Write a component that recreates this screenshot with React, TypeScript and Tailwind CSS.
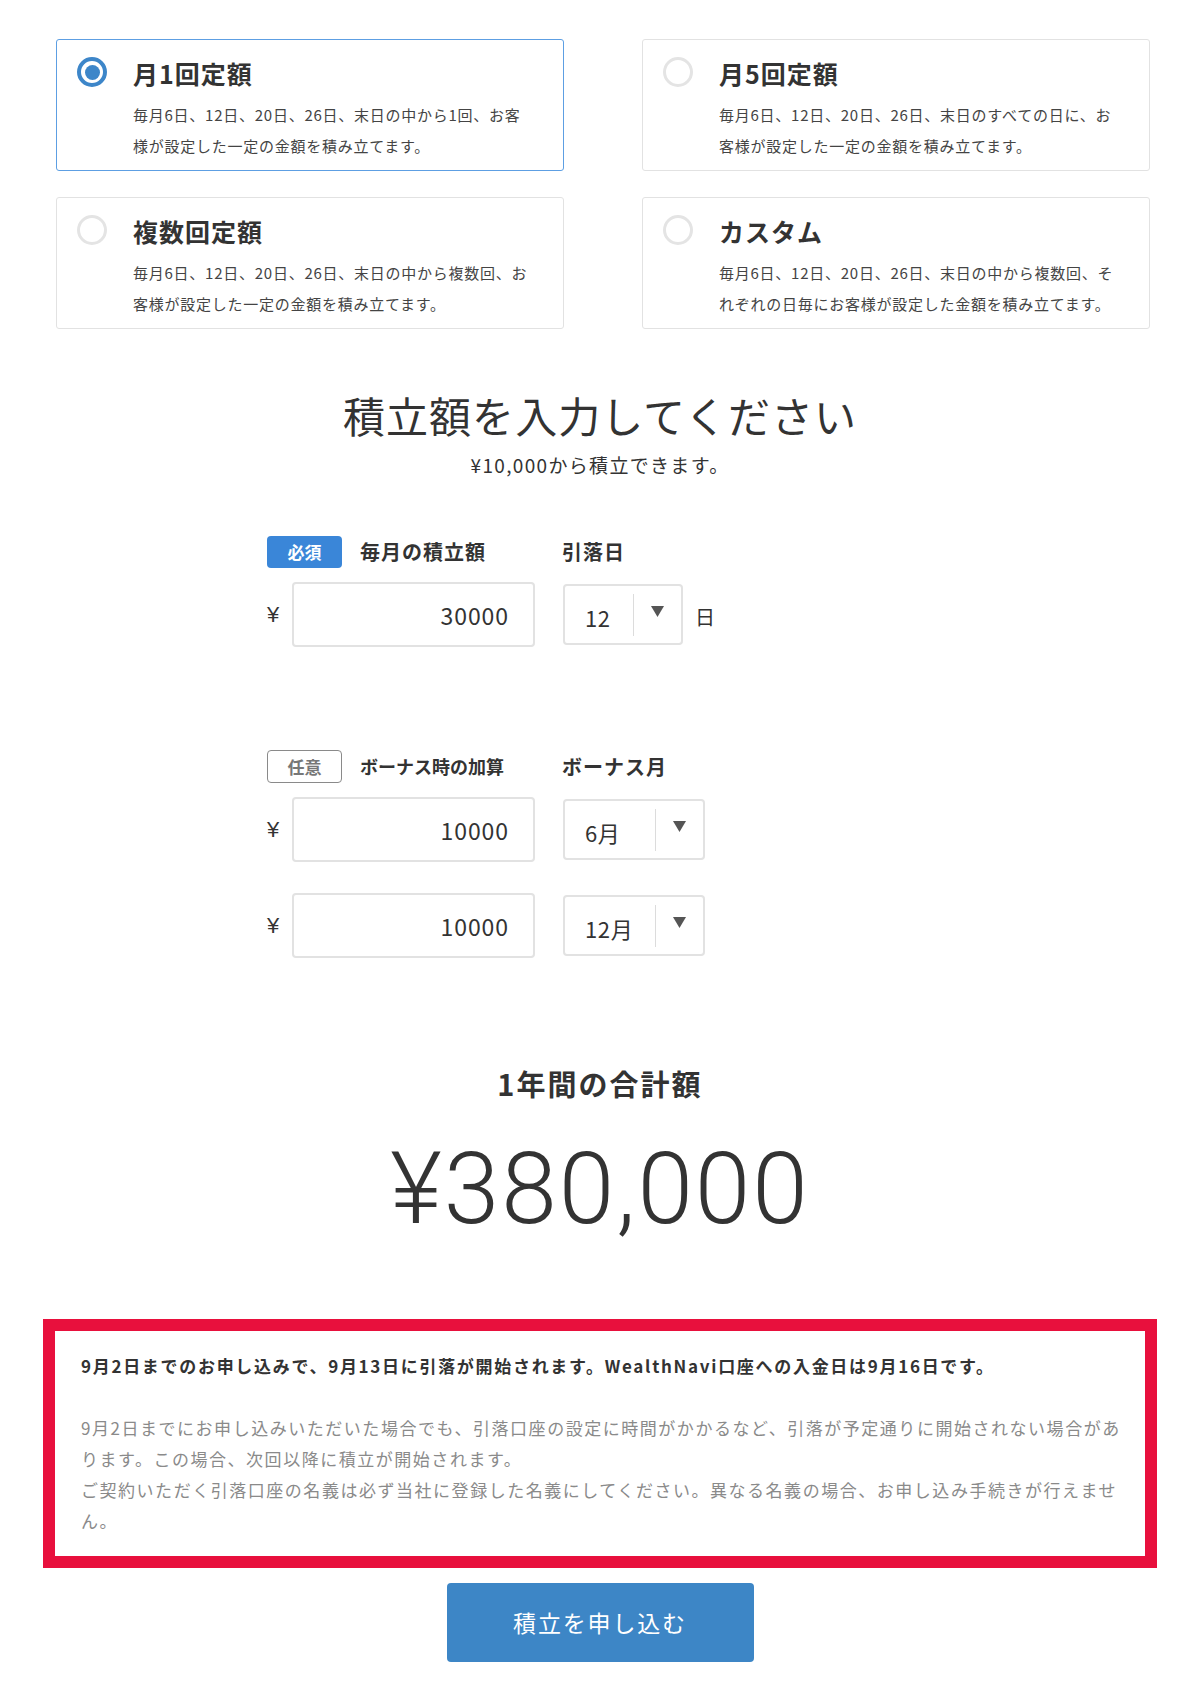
import React from "react";

const plans = [
  {
    title: "月1回定額",
    lines: ["毎月6日、12日、20日、26日、末日の中から1回、お客", "様が設定した一定の金額を積み立てます。"],
    selected: true,
  },
  {
    title: "月5回定額",
    lines: ["毎月6日、12日、20日、26日、末日のすべての日に、お", "客様が設定した一定の金額を積み立てます。"],
  },
  {
    title: "複数回定額",
    lines: ["毎月6日、12日、20日、26日、末日の中から複数回、お", "客様が設定した一定の金額を積み立てます。"],
  },
  {
    title: "カスタム",
    lines: ["毎月6日、12日、20日、26日、末日の中から複数回、そ", "れぞれの日毎にお客様が設定した金額を積み立てます。"],
  },
];

function Radio({ checked }: { checked?: boolean }) {
  if (checked) {
    return (
      <span className="flex h-[30px] w-[30px] shrink-0 items-center justify-center rounded-full border-[4px] border-[#3d86c9]">
        <span className="h-[15px] w-[15px] rounded-full bg-[#3d86c9]" />
      </span>
    );
  }
  return <span className="h-[30px] w-[30px] shrink-0 rounded-full border-[3px] border-[#e4e4e4]" />;
}

function PlanCard({ title, lines, selected }: { title: string; lines: string[]; selected?: boolean }) {
  return (
    <div
      className={
        selected
          ? "flex h-[132px] gap-[26px] rounded-[3px] border-[1.5px] border-[#5d9fe3] pl-[20px] pt-[17px]"
          : "flex h-[132px] gap-[26px] rounded-[3px] border-[1.5px] border-[#e2e2e2] pl-[20px] pt-[17px]"
      }
    >
      <Radio checked={selected} />
      <div className="-mt-[1px]">
        <p className="text-[25px] font-bold leading-[34px] tracking-[0.04em] text-[#333]">{title}</p>
        <p className="mt-[9px] text-[15px] leading-[31px] tracking-[0.05em] whitespace-nowrap text-[#444]">
          {lines[0]}
          <br />
          {lines[1]}
        </p>
      </div>
    </div>
  );
}

const yen = { fontFamily: '"Liberation Sans", Arial, sans-serif' };

function AmountInput({ value }: { value: string }) {
  return (
    <div className="flex items-center gap-[11px]">
      <span className="w-[14px] text-[22px] text-[#333]" style={yen}>
        ¥
      </span>
      <input
        readOnly
        value={value}
        className="h-[65px] w-[243px] rounded-[4px] border-2 border-[#e2e2e2] bg-white pr-[24px] text-right text-[23px] tracking-[0.04em] text-[#333] outline-none"
      />
    </div>
  );
}

function Select({ value, width }: { value: string; width: string }) {
  return (
    <div className={`flex h-[61px] items-center rounded-[4px] border-2 border-[#e2e2e2] bg-white ${width}`}>
      <span className="flex-1 pl-[20px] pt-[5px] text-[22px] tracking-[0.03em] text-[#333]">{value}</span>
      <span className="flex h-[42px] w-[48px] items-center justify-center border-l border-[#dcdcdc] pb-[6px]">
        <svg width="13" height="11" viewBox="0 0 13 11">
          <path d="M0 0h13L6.5 11z" fill="#555" />
        </svg>
      </span>
    </div>
  );
}

export default function App() {
  return (
    <div
      className="min-h-screen bg-white pt-[39px] text-[#333]"
      style={{ fontFamily: '"Noto Sans CJK JP", "Noto Sans", sans-serif' }}
    >
      {/* plan choice */}
      <div className="grid grid-cols-2 gap-x-[78px] gap-y-[26px] pl-[56px] pr-[50px]">
        {plans.map((p) => (
          <PlanCard key={p.title} {...p} />
        ))}
      </div>

      <div className="mt-[58px] text-center">
        <h1 className="text-[42px] font-normal leading-[56px] tracking-[0.025em] text-[#333]">積立額を入力してください</h1>
        <p className="mt-[8px] text-[19px] leading-[28px] tracking-[0.07em] text-[#333]">¥10,000から積立できます。</p>
      </div>

      <div className="mx-auto mt-[57px] w-[666px]">
        {/* monthly */}
        <div className="flex h-[32px] items-center gap-[28px]">
          <div className="flex w-[267px] items-center gap-[18px]">
            <span className="flex h-[32px] w-[75px] items-center justify-center rounded-[4px] bg-[#3a86d8] text-[17px] font-bold text-white">
              必須
            </span>
            <span className="text-[20px] font-bold tracking-[0.05em] text-[#333]">毎月の積立額</span>
          </div>
          <span className="text-[20px] font-bold tracking-[0.05em] text-[#333]">引落日</span>
        </div>
        <div className="mt-[14px] flex items-center gap-[28px]">
          <AmountInput value="30000" />
          <div className="flex items-center gap-[12px]">
            <Select value="12" width="w-[120px]" />
            <span className="pt-[4px] text-[20px] text-[#333]">日</span>
          </div>
        </div>

        {/* bonus */}
        <div className="mt-[103px] flex h-[33px] items-center gap-[28px]">
          <div className="flex w-[267px] items-center gap-[18px]">
            <span className="flex h-[33px] w-[75px] items-center justify-center rounded-[4px] border-[1.5px] border-[#8a8a8a] text-[17px] font-bold text-[#777]">
              任意
            </span>
            <span className="text-[18px] font-bold text-[#333]">ボーナス時の加算</span>
          </div>
          <span className="text-[20px] font-bold tracking-[0.05em] text-[#333]">ボーナス月</span>
        </div>
        <div className="mt-[14px] flex items-center gap-[28px]">
          <AmountInput value="10000" />
          <Select value="6月" width="w-[142px]" />
        </div>
        <div className="mt-[31px] flex items-center gap-[28px]">
          <AmountInput value="10000" />
          <Select value="12月" width="w-[142px]" />
        </div>
      </div>

      {/* yearly total */}
      <div className="mt-[105px] text-center">
        <p className="text-[29px] font-bold leading-[40px] tracking-[0.07em] text-[#333]">1年間の合計額</p>
        <p
          className="mt-[38px] text-[100px] font-light leading-[96px] tracking-[0.02em] text-[#333]"
          style={{ fontFamily: 'Roboto, "Liberation Sans", sans-serif' }}
        >
          ¥380,000
        </p>
      </div>

      {/* notice */}
      <div className="mx-[43px] mt-[82px] border-[12px] border-[#e8103d] px-[26px] pb-[20px] pt-[22px]">
        <p className="text-[17px] font-bold leading-[26px] tracking-[0.1em] text-[#333]">
          9月2日までのお申し込みで、9月13日に引落が開始されます。WealthNavi口座への入金日は9月16日です。
        </p>
        <p className="mt-[33px] whitespace-nowrap text-[17px] leading-[31px] tracking-[0.09em] text-[#8a8a8a]">
          9月2日までにお申し込みいただいた場合でも、引落口座の設定に時間がかかるなど、引落が予定通りに開始されない場合があ
          <br />
          ります。この場合、次回以降に積立が開始されます。
          <br />
          ご契約いただく引落口座の名義は必ず当社に登録した名義にしてください。異なる名義の場合、お申し込み手続きが行えませ
          <br />
          ん。
        </p>
      </div>

      <div className="mt-[15px] flex justify-center pb-[38px]">
        <button className="h-[79px] w-[307px] rounded-[4px] bg-[#3d86c6] text-[23px] tracking-[0.08em] text-white">
          積立を申し込む
        </button>
      </div>
    </div>
  );
}
